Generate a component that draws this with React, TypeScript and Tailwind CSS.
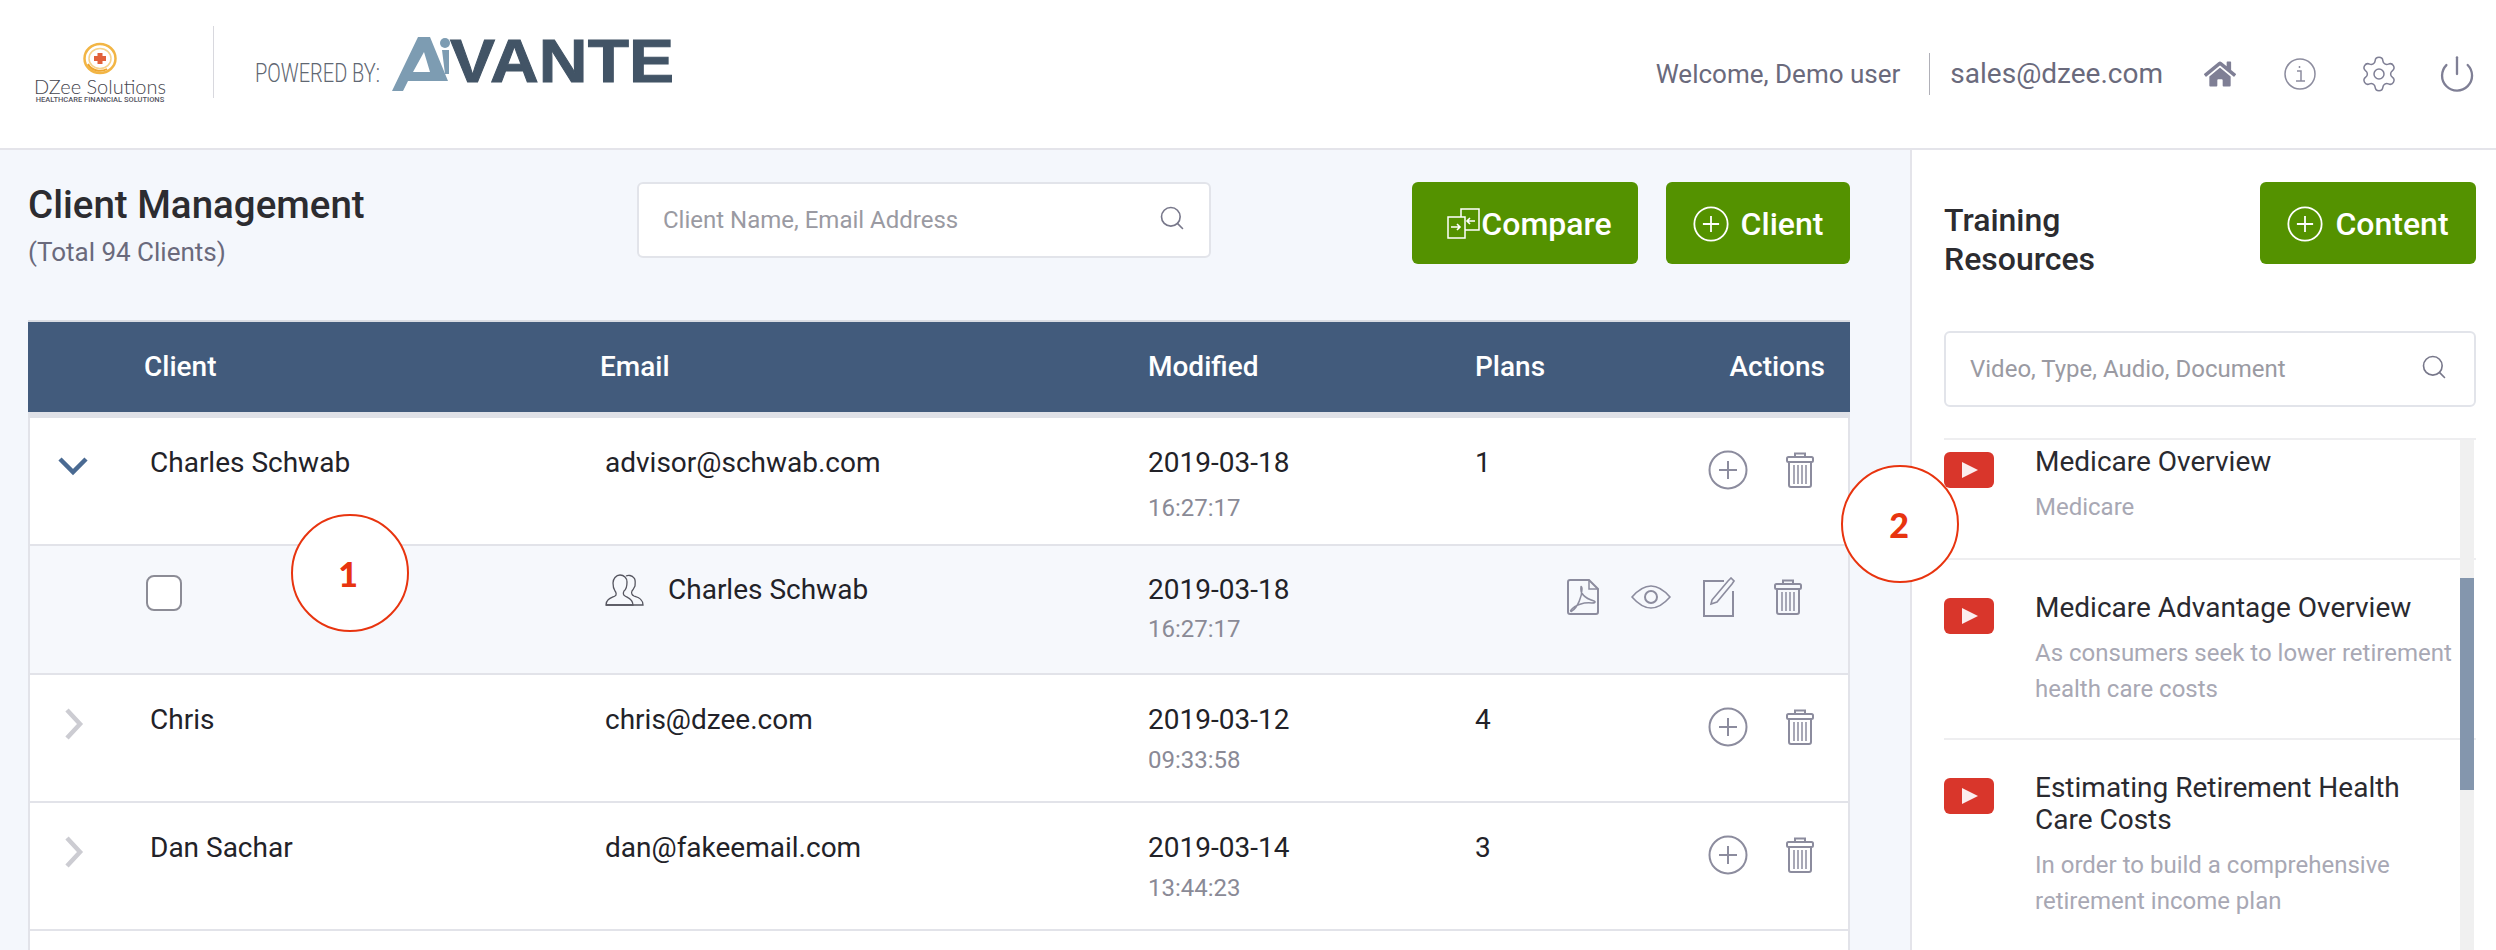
import { Power, Search, Settings } from "lucide-react";
import { FaHome } from "react-icons/fa";

const iconGray = "#8c8c9e";

const PlusCircle = ({ size = 40, color = iconGray, width = 2 }: { size?: number; color?: string; width?: number }) => (
  <svg width={size} height={size} viewBox="0 0 40 40" fill="none" stroke={color} strokeWidth={width}>
    <circle cx="20" cy="20" r="18.5" />
    <path d="M20 11v18M11 20h18" />
  </svg>
);

const Trash = () => (
  <svg width="28" height="36" viewBox="0 0 28 36" fill="none" stroke={iconGray} strokeWidth="2">
    <path d="M9 5V1.5h10V5" />
    <rect x="1" y="5" width="26" height="5" rx="1.5" />
    <path d="M3 10v23a2 2 0 0 0 2 2h18a2 2 0 0 0 2-2V10" />
    <path d="M8 13v19M12 13v19M16 13v19M20 13v19" strokeWidth="1.5" />
  </svg>
);

const PdfIcon = () => (
  <svg width="32" height="36" viewBox="0 0 32 36" fill="none" stroke={iconGray} strokeWidth="2">
    <path d="M3 1h19l9 9v23a2 2 0 0 1-2 2H3a2 2 0 0 1-2-2V3a2 2 0 0 1 2-2z" />
    <path d="M22 1v9h9" strokeWidth="1.5" />
    <path d="M14 8c-1 6 3 11 13 14 2 1 1 2-2 2-8-1-17 2-21 7-1 1 0 2 1 1 6-4 10-15 10-22 0-2-1-3-1-2z" strokeWidth="1.5" />
  </svg>
);

const EyeIcon = () => (
  <svg width="40" height="24" viewBox="0 0 40 24" fill="none" stroke={iconGray} strokeWidth="1.6">
    <path d="M1 12C8 4 14 1 20 1s12 3 19 11c-7 8-13 11-19 11S8 20 1 12z" />
    <circle cx="20" cy="12" r="6" strokeWidth="2" />
  </svg>
);

const EditIcon = () => (
  <svg width="32" height="40" viewBox="0 0 32 40" fill="none" stroke={iconGray} strokeWidth="2">
    <path d="M21 4H1v35h29V14" />
    <path d="M9 23l16-19 3-3 3 3-2 3-15 18-6 2z" strokeWidth="1.6" />
  </svg>
);

const UsersIcon = () => (
  <svg width="40" height="32" viewBox="0 0 40 32" fill="none" stroke="#55555f" strokeWidth="1.3">
    <path d="M1 31c0-6 5-7 9-9 2-1 1-4 0-5-2-3-2-6-2-8 0-4 3-8 7-8s7 3 7 7c0 3 0 7-3 9-1 2-1 4 1 5 3 2 8 3 8 9z" />
    <path d="M21 2c2-1 6-1 8 2 2 2 1 6 1 8-1 2-2 4-3 5-1 2 0 4 2 5 3 1 9 2 9 9h-8M1 31h37" />
  </svg>
);

const PlayIcon = () => (
  <div className="mt-[6px] flex h-[36px] w-[50px] shrink-0 items-center justify-center rounded-[6px] bg-[#d9362b]">
    <svg width="17" height="16" viewBox="0 0 17 16" fill="#fbeeee">
      <path d="M1 0l16 8-16 8z" />
    </svg>
  </div>
);

const CompareIcon = () => (
  <svg width="34" height="32" viewBox="0 0 34 32" fill="none" stroke="#fff" strokeWidth="1.5">
    <rect x="1" y="9" width="17" height="21" />
    <path d="M14 9V1h18v21H18" />
    <path d="M4 19h9M10 16l3 3-3 3M28 13h-8M23 10l-3 3 3 3" strokeWidth="1.6" />
  </svg>
);

const GreenButton = ({ label, icon, className }: { label: string; icon: React.ReactNode; className: string }) => (
  <button className={`flex h-[82px] items-center justify-center rounded-[6px] bg-[#549200] pt-[1px] text-[32px] font-medium leading-none text-white ${className}`}>
    {icon}
    {label}
  </button>
);

const clients = [
  { name: "Chris", email: "chris@dzee.com", date: "2019-03-12", time: "09:33:58", plans: 4 },
  { name: "Dan Sachar", email: "dan@fakeemail.com", date: "2019-03-14", time: "13:44:23", plans: 3 },
];

const resources = [
  { title: ["Medicare Overview"], desc: ["Medicare"], top: "pt-[6px]", height: "h-[120px]" },
  { title: ["Medicare Advantage Overview"], desc: ["As consumers seek to lower retirement", "health care costs"], top: "pt-[32px]", height: "h-[180px]" },
  { title: ["Estimating Retirement Health", "Care Costs"], desc: ["In order to build a comprehensive", "retirement income plan"], top: "pt-[32px]", height: "h-[212px]" },
];

const DateCell = ({ date, time, gap }: { date: string; time: string; gap: string }) => (
  <div className="w-[327px] shrink-0">
    <div className="text-[28px] leading-[32px] text-[#222228]">{date}</div>
    <div className={`text-[24px] leading-[30px] text-[#8a8a96] ${gap}`}>{time}</div>
  </div>
);

const App = () => {
  return (
    <div className="relative h-[950px] w-[2496px] overflow-hidden bg-white font-['Roboto',sans-serif]">
      <header className="flex h-[150px] items-center border-b-2 border-[#e4e4ea] bg-white">
        <div className="ml-[35px] flex w-[130px] flex-col items-center self-start pt-[42px]">
          <svg width="36" height="33" viewBox="0 0 36 33" fill="none">
            <ellipse cx="18" cy="16.5" rx="15.5" ry="14.5" stroke="#f2b544" strokeWidth="2.5" />
            <path d="M6 22c3 6 12 9 19 5" stroke="#eea52c" strokeWidth="2" />
            <ellipse cx="18" cy="16.5" rx="11" ry="10" stroke="#f6d28a" strokeWidth="1.5" />
            <path d="M15.5 11h5v3h3.5v5h-3.5v3h-5v-3H12v-5h3.5z" fill="#e2613a" />
          </svg>
          <div className="mt-[1px] font-['Lato',sans-serif] text-[20px] leading-[20px] font-light whitespace-nowrap text-[#45454e]">DZee Solutions</div>
          <div className="text-[7.5px] leading-[8px] font-medium whitespace-nowrap text-[#55555f]">HEALTHCARE FINANCIAL SOLUTIONS</div>
        </div>
        <div className="ml-[48px] h-[72px] w-[1px] -translate-y-[12px] bg-[#d8d8de]" />
        <svg width="137" height="30" viewBox="0 0 137 30" className="ml-[41px] overflow-visible">
          <text x="0" y="23" fontFamily="Roboto" fontWeight="300" fontSize="25" textLength="125" lengthAdjust="spacingAndGlyphs" fill="#5f6772">POWERED BY:</text>
        </svg>
        <svg width="282" height="54" viewBox="0 0 282 54" className="-translate-y-[10px] overflow-visible">
          <path d="M0 54L26 0H38L56 44H16L11 54zM21 35H38L32 15z" fill="#7d9cb2" fillRule="evenodd" />
          <circle cx="53" cy="6" r="5" fill="#7d9cb2" />
          <path d="M50 13h7v24h-4z" fill="#7d9cb2" />
          <text x="58" y="45" fontFamily="Liberation Sans" fontWeight="700" fontSize="62" textLength="224" lengthAdjust="spacingAndGlyphs" fill="#425466" stroke="#425466" strokeWidth="1">VANTE</text>
        </svg>
        <div className="ml-auto flex items-center text-[#6a6a7c]">
          <span className="text-[26px]">Welcome, Demo user</span>
          <div className="mr-[20px] ml-[29px] h-[42px] w-[1px] bg-[#b0b0b8]" />
          <span className="text-[28px]">sales@dzee.com</span>
          <FaHome size={32} color="#7f7f95" className="ml-[41px]" />
          <svg width="32" height="32" viewBox="0 0 32 32" fill="none" stroke={iconGray} strokeWidth="1.5" className="ml-[48px]">
            <circle cx="16" cy="16" r="15" />
            <path d="M13 13h4v10M12 23h9M15.5 8v2" />
          </svg>
          <Settings size={40} strokeWidth={0.9} color="#7f7f95" className="ml-[43px]" />
          <Power size={40} strokeWidth={1.4} color="#7f7f95" className="mr-[19px] ml-[38px]" />
        </div>
      </header>

      <div className="flex h-[800px]">
        <main className="w-[1912px] shrink-0 border-r-2 border-[#e4e4ea] bg-[#f4f7fc] pr-[60px] pl-[28px]">
          <div className="flex h-[170px] items-start pt-[32px]">
            <div className="w-[609px] shrink-0">
              <h1 className="pt-[1px] text-[38.5px] leading-[44px] font-medium text-[#2c2c30]">Client Management</h1>
              <div className="mt-[10px] text-[26px] leading-[30px] text-[#6a6a7c]">(Total 94 Clients)</div>
            </div>
            <div className="flex h-[76px] w-[574px] items-center justify-between rounded-[6px] border-2 border-[#e2e4ea] bg-white pr-[23px] pl-[24px]">
              <span className="text-[24px] text-[#9a9aa2]">Client Name, Email Address</span>
              <Search size={28} strokeWidth={1.4} color="#77778a" className="mb-[4px]" />
            </div>
            <GreenButton label="Compare" className="ml-[201px] w-[226px] pl-[9px]" icon={<CompareIcon />} />
            <GreenButton label="Client" className="ml-[28px] w-[184px] gap-[12px]" icon={<PlusCircle size={36} color="#fff" />} />
          </div>

          <div className="flex h-[92px] items-center border-t-2 border-[#d9dce3] bg-[#425b7c] text-[28px] font-medium text-white">
            <div className="w-[572px] pl-[116px]">Client</div>
            <div className="w-[548px]">Email</div>
            <div className="w-[327px]">Modified</div>
            <div>Plans</div>
            <div className="mr-[25px] ml-auto">Actions</div>
          </div>
          <div className="h-[6px] bg-[#dfe1e7]" />

          <div className="border-x-2 border-[#e2e3e9] bg-white">
            <div className="flex h-[128px] items-start border-b-2 border-[#e2e3e9] pt-[29px]">
              <div className="w-[120px] shrink-0 pt-[9px] pl-[28px]">
                <svg width="30" height="20" viewBox="0 0 30 20" fill="none" stroke="#4a6a92" strokeWidth="4.5">
                  <path d="M2 3l13 13L28 3" />
                </svg>
              </div>
              <div className="w-[455px] shrink-0 text-[28px] leading-[32px] text-[#222228]">Charles Schwab</div>
              <div className="w-[543px] shrink-0 text-[28px] leading-[32px] text-[#222228]">advisor@schwab.com</div>
              <DateCell date="2019-03-18" time="16:27:17" gap="mt-[14px]" />
              <div className="text-[28px] leading-[32px] text-[#222228]">1</div>
              <div className="mt-[3px] mr-[34px] ml-auto flex items-center gap-[38px]">
                <PlusCircle />
                <Trash />
              </div>
            </div>

            <div className="flex h-[129px] items-start border-b-2 border-[#e2e3e9] bg-[#f6f8fc] pt-[28px]">
              <div className="w-[120px] shrink-0" />
              <div className="w-[455px] shrink-0 pt-[1px]">
                <div className="-ml-[4px] h-[36px] w-[36px] rounded-[8px] border-2 border-[#8c8c96] bg-white" />
              </div>
              <div className="flex w-[543px] shrink-0 items-center gap-[23px] text-[28px] leading-[32px] text-[#222228]">
                <UsersIcon />
                Charles Schwab
              </div>
              <DateCell date="2019-03-18" time="16:27:17" gap="mt-[8px]" />
              <div className="mt-[3px] mr-[46px] ml-auto flex items-center">
                <PdfIcon />
                <div className="ml-[32px]">
                  <EyeIcon />
                </div>
                <div className="ml-[32px]">
                  <EditIcon />
                </div>
                <div className="ml-[39px]">
                  <Trash />
                </div>
              </div>
            </div>

            {clients.map((client) => (
              <div key={client.name} className="flex h-[128px] items-start border-b-2 border-[#e2e3e9] pt-[29px]">
                <div className="w-[120px] shrink-0 pl-[34px]">
                  <svg width="20" height="32" viewBox="0 0 20 32" fill="none" stroke="#ccccd2" strokeWidth="4.5" className="mt-[4px]">
                    <path d="M3 2l13 14L3 30" />
                  </svg>
                </div>
                <div className="w-[455px] shrink-0 text-[28px] leading-[32px] text-[#222228]">{client.name}</div>
                <div className="w-[543px] shrink-0 text-[28px] leading-[32px] text-[#222228]">{client.email}</div>
                <DateCell date={client.date} time={client.time} gap="mt-[9px]" />
                <div className="text-[28px] leading-[32px] text-[#222228]">{client.plans}</div>
                <div className="mt-[3px] mr-[34px] ml-auto flex items-center gap-[38px]">
                  <PlusCircle />
                  <Trash />
                </div>
              </div>
            ))}
            <div className="h-[60px]" />
          </div>
        </main>

        <aside className="min-w-0 flex-1 bg-white pr-[20px] pl-[32px]">
          <div className="flex h-[181px] items-start justify-between pt-[32px]">
            <h2 className="pt-[19px] text-[32px] leading-[39px] font-medium text-[#2c2c30]">
              Training
              <br />
              Resources
            </h2>
            <GreenButton label="Content" className="w-[216px] gap-[12px]" icon={<PlusCircle size={36} color="#fff" />} />
          </div>
          <div className="flex h-[76px] items-center justify-between rounded-[6px] border-2 border-[#e2e4ea] bg-white pr-[26px] pl-[24px]">
            <span className="text-[24px] text-[#9a9aa2]">Video, Type, Audio, Document</span>
            <Search size={28} strokeWidth={1.4} color="#77778a" className="mb-[4px]" />
          </div>
          <div className="relative mt-[31px] h-[512px] overflow-hidden border-t-2 border-[#eeeeF0]">
            {resources.map((item) => (
              <div key={item.title[0]} className={`flex border-b-2 border-[#eeeef0] ${item.height} ${item.top}`}>
                <PlayIcon />
                <div className="ml-[41px] whitespace-nowrap">
                  <div className="text-[28px] leading-[32px] text-[#2a2a30]">
                    {item.title.map((line) => (
                      <div key={line}>{line}</div>
                    ))}
                  </div>
                  <div className="mt-[11px] text-[24px] leading-[36px] text-[#a8a8b4]">
                    {item.desc.map((line) => (
                      <div key={line}>{line}</div>
                    ))}
                  </div>
                </div>
              </div>
            ))}
            <div className="absolute top-0 right-[2px] h-full w-[14px] bg-[#f0f0f0]">
              <div className="mt-[138px] h-[212px] bg-[#8496ad]" />
            </div>
          </div>
        </aside>
      </div>

      <div className="absolute top-[514px] left-[291px] flex h-[118px] w-[118px] items-center justify-center rounded-full border-2 border-[#e8340f] bg-white pr-[4px] font-['Lato',sans-serif] text-[34px] font-black text-[#e8340f]">1</div>
      <div className="absolute top-[465px] left-[1841px] flex h-[118px] w-[118px] items-center justify-center rounded-full border-2 border-[#e8340f] bg-white pr-[2px] font-['Lato',sans-serif] text-[34px] font-black text-[#e8340f]">2</div>
    </div>
  );
};

export default App;
